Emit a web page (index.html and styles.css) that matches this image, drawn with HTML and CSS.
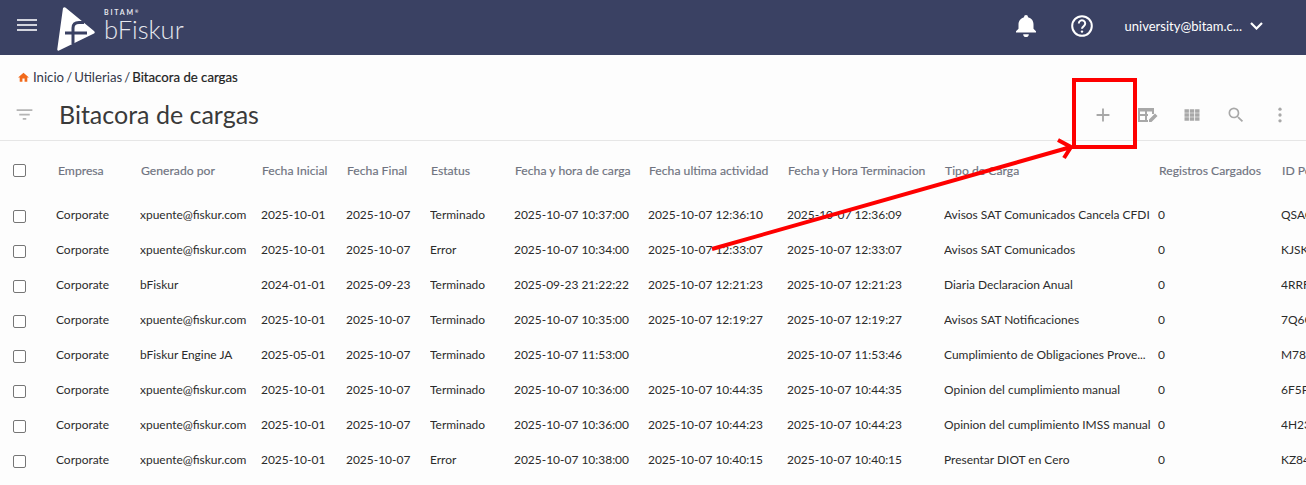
FILE: index.html
```html
<!DOCTYPE html>
<html lang="es">
<head>
<meta charset="utf-8">
<title>Bitacora de cargas</title>
<link rel="stylesheet" href="styles.css">
</head>
<body>
<header class="topbar">
  <div class="brand">
    <svg class="menu-icon" viewBox="0 0 20 12"><path d="M0 1h20M0 6h20M0 11h20"/></svg>
    <svg class="logo" viewBox="0 0 40 46"><path class="logo-w" d="M7 3 Q8.500 1.500 10 3 L38 26 Q39.500 27.500 38 28.500 L3 45.500 Q1 46.300 1.300 44 Z"/><path class="logo-c" d="M9 28 H31 M17 39 V23 Q17 17.500 23 17.500 H28"/></svg>
    <div class="wordmark"><span class="bitam">BITAM<small>®</small></span><span class="bfiskur">bFiskur</span></div>
  </div>
  <div class="top-actions">
    <svg class="bell" viewBox="0 0 20 22"><path d="M10 22a2.800 2.800 0 0 0 2.800-2.800H7.200A2.800 2.800 0 0 0 10 22zm10-4.500v-1.300l-2.500-2.500V9.500c0-3.700-2-6.400-5.500-7.200V2a2 2 0 0 0-4 0v.3C5 3.100 2.500 5.800 2.500 9.500v4.200L0 16.200v1.300z"/></svg>
    <svg class="help" viewBox="0 0 24 24"><circle cx="12" cy="12" r="9.800"/><path d="M8.800 9.500a3.200 3.200 0 1 1 5 2.600c-1.200.8-1.800 1.400-1.800 2.700"/><circle class="dot" cx="12" cy="17.600" r="1.200"/></svg>
    <span class="user">university@bitam.c...</span>
    <svg class="chev" viewBox="0 0 13 8"><path d="M1 1l5.500 5.500L12 1"/></svg>
  </div>
</header>

<nav class="crumbs">
  <svg class="home" viewBox="0 0 24 24"><path d="M10 20v-6h4v6h5v-8h3L12 3 2 12h3v8z"/></svg>
  <span class="trail">Inicio / Utilerias / <b>Bitacora de cargas</b></span>
</nav>

<div class="toolbar">
  <svg class="tool filter" viewBox="0 0 24 24"><path d="M10 18h4v-2h-4v2zM3 6v2h18V6H3zm3 7h12v-2H6v2z"/></svg>
  <h1>Bitacora de cargas</h1>
  <div class="tools">
    <svg class="tool plus" viewBox="0 0 24 24"><path d="M19 13h-6v6h-2v-6H5v-2h6V5h2v6h6z"/></svg>
    <svg class="tool" viewBox="0 0 20 20"><path d="M0 3h16v6h-2V6.500H9V9H7V6.500H2V9h8v2H2v4h5v-4h2v4h1v2H0zM11 17v-2.500l6-6 2.500 2.500-6 6z"/></svg>
    <svg class="tool" viewBox="0 0 24 24"><path d="M3 5h5.300v4.300H3zm6.300 0h5.400v4.300H9.300zm6.400 0H21v4.300h-5.300zM3 10h5.300v4H3zm6.300 0h5.400v4H9.300zm6.400 0H21v4h-5.300zM3 14.700h5.300V19H3zm6.300 0h5.400V19H9.300zm6.400 0H21V19h-5.300z"/></svg>
    <svg class="tool" viewBox="0 0 24 24"><path d="M15.500 14h-.79l-.28-.27A6.471 6.471 0 0 0 16 9.500 6.500 6.500 0 1 0 9.500 16c1.610 0 3.090-.59 4.230-1.570l.27.28v.79l5 4.990L20.490 19l-4.990-5zm-6 0C7.010 14 5 11.990 5 9.500S7.010 5 9.500 5 14 7.010 14 9.500 11.990 14 9.500 14z"/></svg>
    <svg class="tool" viewBox="0 0 24 24"><circle cx="12" cy="5" r="2"/><circle cx="12" cy="12" r="2"/><circle cx="12" cy="19" r="2"/></svg>
  </div>
</div>

<table class="grid">
  <colgroup>
    <col class="c0"><col class="c1"><col class="c2"><col class="c3"><col class="c4"><col class="c5"><col class="c6"><col class="c7"><col class="c8"><col class="c9"><col class="c10"><col class="c11">
  </colgroup>
  <thead>
    <tr>
      <th><span class="check"></span></th><th>Empresa</th><th>Generado por</th><th>Fecha Inicial</th><th>Fecha Final</th><th>Estatus</th><th>Fecha y hora de carga</th><th>Fecha ultima actividad</th><th>Fecha y Hora Terminacion</th><th>Tipo de Carga</th><th>Registros Cargados</th><th>ID Pe</th>
    </tr>
  </thead>
  <tbody>
    <tr><td><span class="check"></span></td><td>Corporate</td><td>xpuente@fiskur.com</td><td>2025-10-01</td><td>2025-10-07</td><td>Terminado</td><td>2025-10-07 10:37:00</td><td>2025-10-07 12:36:10</td><td>2025-10-07 12:36:09</td><td>Avisos SAT Comunicados Cancela CFDI</td><td>0</td><td>QSAC</td></tr>
    <tr><td><span class="check"></span></td><td>Corporate</td><td>xpuente@fiskur.com</td><td>2025-10-01</td><td>2025-10-07</td><td>Error</td><td>2025-10-07 10:34:00</td><td>2025-10-07 12:33:07</td><td>2025-10-07 12:33:07</td><td>Avisos SAT Comunicados</td><td>0</td><td>KJSK</td></tr>
    <tr><td><span class="check"></span></td><td>Corporate</td><td>bFiskur</td><td>2024-01-01</td><td>2025-09-23</td><td>Terminado</td><td>2025-09-23 21:22:22</td><td>2025-10-07 12:21:23</td><td>2025-10-07 12:21:23</td><td>Diaria Declaracion Anual</td><td>0</td><td>4RRF</td></tr>
    <tr><td><span class="check"></span></td><td>Corporate</td><td>xpuente@fiskur.com</td><td>2025-10-01</td><td>2025-10-07</td><td>Terminado</td><td>2025-10-07 10:35:00</td><td>2025-10-07 12:19:27</td><td>2025-10-07 12:19:27</td><td>Avisos SAT Notificaciones</td><td>0</td><td>7Q6G</td></tr>
    <tr><td><span class="check"></span></td><td>Corporate</td><td>bFiskur Engine JA</td><td>2025-05-01</td><td>2025-10-07</td><td>Terminado</td><td>2025-10-07 11:53:00</td><td></td><td>2025-10-07 11:53:46</td><td>Cumplimiento de Obligaciones Prove...</td><td>0</td><td>M78</td></tr>
    <tr><td><span class="check"></span></td><td>Corporate</td><td>xpuente@fiskur.com</td><td>2025-10-01</td><td>2025-10-07</td><td>Terminado</td><td>2025-10-07 10:36:00</td><td>2025-10-07 10:44:35</td><td>2025-10-07 10:44:35</td><td>Opinion del cumplimiento manual</td><td>0</td><td>6F5P</td></tr>
    <tr><td><span class="check"></span></td><td>Corporate</td><td>xpuente@fiskur.com</td><td>2025-10-01</td><td>2025-10-07</td><td>Terminado</td><td>2025-10-07 10:36:00</td><td>2025-10-07 10:44:23</td><td>2025-10-07 10:44:23</td><td>Opinion del cumplimiento IMSS manual</td><td>0</td><td>4H23</td></tr>
    <tr><td><span class="check"></span></td><td>Corporate</td><td>xpuente@fiskur.com</td><td>2025-10-01</td><td>2025-10-07</td><td>Error</td><td>2025-10-07 10:38:00</td><td>2025-10-07 10:40:15</td><td>2025-10-07 10:40:15</td><td>Presentar DIOT en Cero</td><td>0</td><td>KZ84</td></tr>
  </tbody>
</table>

<svg class="annotation" viewBox="0 0 1306 485">
  <rect x="1074" y="80" width="61" height="67"/>
  <path d="M712 249 L1071 147 M1058 140 L1071 147 L1064 158"/>
</svg>
</body>
</html>
```
FILE: styles.css
```css
* { box-sizing: border-box; }
html, body { margin: 0; height: 485px; overflow: hidden; }
body { width: 1306px; position: relative; background: #fdfdfd; font-family: Lato, "Open Sans", sans-serif; color: #2b2b2b; }

.topbar { height: 55px; background: #3a4163; display: flex; align-items: center; justify-content: space-between; color: #fff; }
.brand { display: flex; align-items: center; padding-left: 17px; }
.menu-icon { width: 20px; height: 12px; margin-top: -5px; fill: none; stroke: #d3d5de; stroke-width: 2; }
.logo { width: 40px; height: 46px; margin-left: 19px; }
.logo-w { fill: #fff; }
.logo-c { fill: none; stroke: #3a4163; stroke-width: 3; }
.wordmark { display: flex; flex-direction: column; margin: -5px 0 0 8px; color: #e6e7ee; }
.bitam { font-size: 7px; line-height: 8px; letter-spacing: 1.800px; font-weight: 700; }
.bitam small { font-size: 4px; letter-spacing: 0; vertical-align: 2px; }
.bfiskur { font-size: 25.500px; line-height: 26px; font-weight: 300; }
.top-actions { display: flex; align-items: center; margin-bottom: 4px; }
.bell { width: 20px; height: 22px; fill: #fff; margin-right: 34px; }
.help { width: 24px; height: 24px; fill: none; stroke: #fff; stroke-width: 2; margin-right: 31px; }
.help .dot { fill: #fff; stroke: none; }
.user { font-size: 13px; }
.chev { width: 13px; height: 8px; margin: 0 43px 0 8px; fill: none; stroke: #fff; stroke-width: 2.200; }

.crumbs { height: 44px; padding-left: 17px; display: flex; align-items: center; font-size: 13.200px; color: #33384a; }
.trail { word-spacing: -1.300px; }
.crumbs b { font-weight: 400; color: #222; word-spacing: 0; -webkit-text-stroke: .2px #222; }
.home { width: 13px; height: 13px; fill: #f26a1b; margin-right: 3px; }

.toolbar { height: 42px; display: flex; align-items: center; padding: 0 15px 10px 14px; border-bottom: 1px solid #e6e6e6; }
.toolbar h1 { margin: 0 0 2px 24px; font-size: 25px; font-weight: 400; color: #3a3a3a; }
.tool { width: 20px; height: 20px; fill: #a8a8a8; flex: none; }
.filter { width: 21px; height: 21px; fill: #b4b4b4; }
.tools { margin-left: auto; display: flex; align-items: center; gap: 24px; padding-right: 1px; }
.tool.plus { width: 22px; height: 22px; }

.grid { table-layout: fixed; width: 1326px; border-collapse: collapse; }
.c0 { width: 56px; } .c1 { width: 84px; } .c2 { width: 121px; } .c3 { width: 85px; } .c4 { width: 84px; } .c5 { width: 84px; } .c6 { width: 134px; } .c7 { width: 139px; } .c8 { width: 157px; } .c9 { width: 214px; } .c10 { width: 123px; } .c11 { width: 45px; }
th, td { padding: 0; text-align: left; white-space: nowrap; overflow: hidden; vertical-align: middle; }
th { height: 56px; font-size: 12.200px; font-weight: 400; color: #6f7380; padding: 3px 0 0 1px; -webkit-text-stroke: .15px #6f7380; }
th:nth-child(2) { padding-left: 2px; }
td { height: 35px; font-size: 11.960px; color: #2b2b2b; }
thead th:first-child { padding-left: 13px; }
tbody td:first-child { padding: 4px 0 0 13px; }
.check { display: block; width: 13px; height: 13px; border: 1.500px solid #767676; border-radius: 2px; background: #fff; }

.annotation { position: absolute; left: 0; top: 0; width: 1306px; height: 485px; pointer-events: none; fill: none; stroke: #fe0000; }
.annotation rect { stroke-width: 4; }
.annotation path { stroke-width: 4; }
```
